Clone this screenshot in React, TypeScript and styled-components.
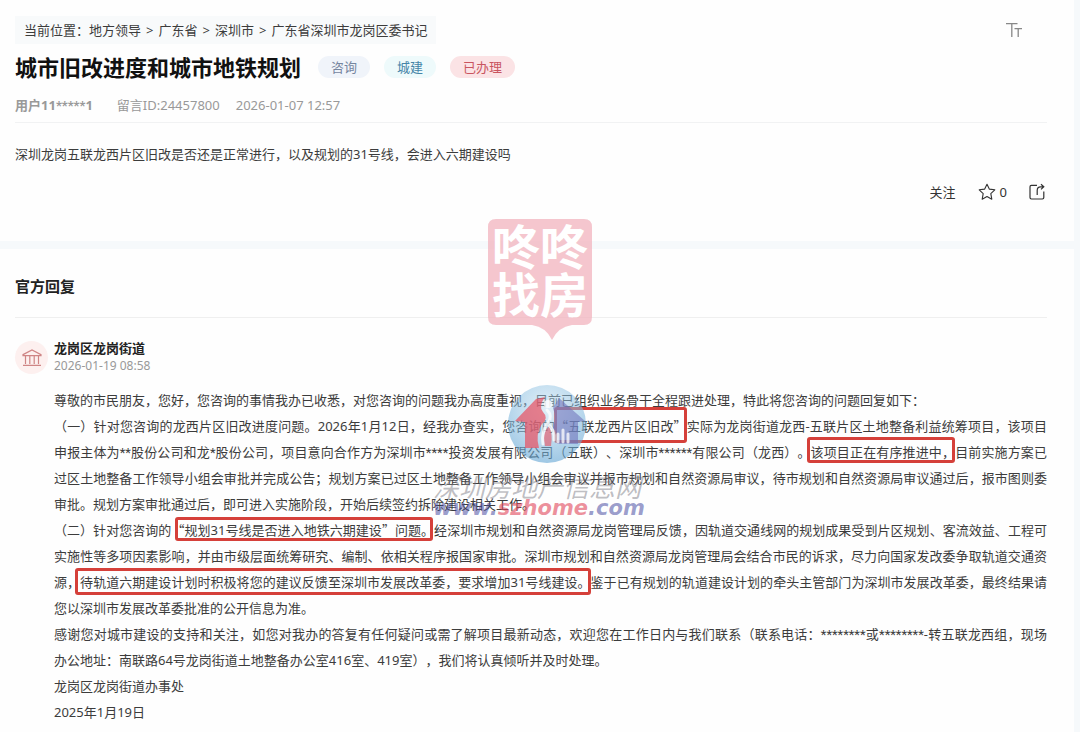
import React from 'react';
import styled, { createGlobalStyle } from 'styled-components';

const GlobalStyle = createGlobalStyle`
  * { box-sizing: border-box; }
  body {
    margin: 0;
    background: #f6f9fb;
    color: #3c3c3c;
    font-family: "Noto Sans", "Noto Sans CJK SC", sans-serif;
    font-size: 13px;
    line-height: 26px;
    text-spacing-trim: space-all;
  }
  h1, h2, h3, p { margin: 0; }
`;

const Page = styled.main`
  position: relative;
  display: flex;
  flex-direction: column;
  gap: 8px;
  min-height: 100vh;
  padding-right: 6px;
  background: #f6f9fb;
`;

const Card = styled.section<{ $top: number; $bottom: number; $grow?: boolean }>`
  flex: ${p => (p.$grow ? '1 0 auto' : 'none')};
  background: #fefefe;
  padding: ${p => p.$top}px 27px ${p => p.$bottom}px 15px;
`;

const TopBar = styled.div`
  display: flex;
  justify-content: space-between;
  align-items: center;
  padding-right: 24px;
`;

const Breadcrumb = styled.nav`
  display: flex;
  gap: 5px;
  padding: 0 9px;
  background: #f8fafb;
  line-height: 28px;
  a { color: inherit; text-decoration: none; }
`;

const IconButton = styled.button<{ $muted?: boolean }>`
  display: flex;
  align-items: center;
  gap: 4px;
  padding: 0;
  border: 0;
  background: none;
  color: ${p => (p.$muted ? '#888' : '#333')};
  font: inherit;
  cursor: pointer;
`;

const TitleRow = styled.div`
  display: flex;
  align-items: center;
  gap: 17px;
  margin-top: 7px;
`;

const Title = styled.h1`
  color: #111;
  font-size: 22px;
  line-height: 32px;
  font-weight: 700;
`;

const Tags = styled.div`
  display: flex;
  gap: 14px;
`;

const Tag = styled.span<{ $bg: string; $fg: string }>`
  padding: 0 13px;
  border-radius: 11px;
  line-height: 22px;
  background: ${p => p.$bg};
  color: ${p => p.$fg};
`;

const Meta = styled.div`
  display: flex;
  gap: 16px;
  margin-top: 9px;
  padding-bottom: 4px;
  border-bottom: 1px solid #f1f2f3;
  color: #999;
  strong { margin-right: 8px; }
`;

const Question = styled.p`
  margin-top: 18px;
`;

const Actions = styled.div`
  display: flex;
  justify-content: flex-end;
  gap: 22px;
  margin-top: 12px;
  padding-right: 2px;
`;

const SectionTitle = styled.h2`
  padding-bottom: 18px;
  border-bottom: 1px solid #efefef;
  color: #222;
  font-size: 15px;
  font-weight: 700;
`;

const Reply = styled.article`
  display: grid;
  grid-template-columns: 33px 1fr;
  column-gap: 6px;
  margin-top: 21px;
`;

const Avatar = styled.div`
  display: flex;
  align-items: center;
  justify-content: center;
  width: 33px;
  height: 33px;
  margin-top: 2px;
  border-radius: 50%;
  background: #fdf0ef;
`;

const Author = styled.h3`
  color: #222;
  font-size: 13px;
  line-height: 18px;
  font-weight: 700;
`;

const Time = styled.time`
  display: block;
  color: #999;
  font-size: 12px;
  line-height: 18px;
`;

const Body = styled.div`
  grid-column: 2;
  margin-top: 12px;
`;

const Line = styled.span<{ $full?: boolean }>`
  display: block;
  white-space: nowrap;
  text-align: justify;
  text-align-last: ${p => (p.$full ? 'justify' : 'left')};
`;

const Masked = styled.span`
  font-family: Roboto, sans-serif;
  line-height: 1;
`;

const Wide = styled.span`
  font-family: "Noto Sans CJK SC", sans-serif;
  line-height: 1;
`;

const Marked = styled.mark<{ $inset: string }>`
  position: relative;
  background: none;
  color: inherit;
  &::after {
    content: "";
    position: absolute;
    inset: ${p => p.$inset};
    border: 3px solid #d5403a;
    border-radius: 3px;
  }
`;

const Seal = styled.div`
  position: absolute;
  top: 219px;
  left: 50%;
  width: 104px;
  height: 122px;
  margin-left: -52px;
  pointer-events: none;
`;

const SealShape = styled.svg`
  position: absolute;
  inset: 0;
`;

const SealText = styled.div`
  position: relative;
  padding-top: 4px;
  color: #fff;
  font-size: 48px;
  line-height: 48px;
  font-weight: 700;
  text-align: center;
`;

const SiteMark = styled.div`
  position: absolute;
  top: 384px;
  left: 50%;
  width: 216px;
  margin-left: -107px;
  pointer-events: none;
`;

const SiteLogo = styled.svg`
  display: block;
  margin-left: 74px;
`;

const SiteName = styled.div`
  margin-top: 12px;
  color: rgba(110, 110, 120, 0.45);
  font-size: 26px;
  line-height: 22px;
  font-style: italic;
  white-space: nowrap;
`;

const SiteUrl = styled.div`
  color: rgba(70, 75, 160, 0.55);
  font-family: "DejaVu Sans", sans-serif;
  font-size: 21px;
  line-height: 20px;
  font-weight: 700;
  font-style: italic;
  b { color: rgba(225, 70, 90, 0.6); }
`;

const Stars = ({ n }: { n: number }) => <Masked>{'*'.repeat(n)}</Masked>;

export default function App() {
  return (
    <Page lang="zh-CN">
      <GlobalStyle />
      <Card $top={16} $bottom={36}>
        <TopBar>
          <Breadcrumb aria-label="当前位置">
            <span>当前位置：<a href="#leaders">地方领导</a></span>
            <span>&gt;</span>
            <a href="#gd">广东省</a>
            <span>&gt;</span>
            <a href="#sz">深圳市</a>
            <span>&gt;</span>
            <a href="#lg">广东省深圳市龙岗区委书记</a>
          </Breadcrumb>
          <IconButton aria-label="字号" $muted>
            <svg width="18" height="18" viewBox="0 0 18 18" fill="none" stroke="currentColor" strokeWidth="1.3">
              <path d="M1 2.6H12.5M6.8 2.6V16M9.5 7.6H17M13.2 7.6V16" />
            </svg>
          </IconButton>
        </TopBar>
        <TitleRow>
          <Title>城市旧改进度和城市地铁规划</Title>
          <Tags>
            <Tag $bg="#f0f4fa" $fg="#7686a0">咨询</Tag>
            <Tag $bg="#eefafb" $fg="#4585a8">城建</Tag>
            <Tag $bg="#fbe3e5" $fg="#c9555f">已办理</Tag>
          </Tags>
        </TitleRow>
        <Meta>
          <strong>用户11<Stars n={5} />1</strong>
          <span>留言ID:24457800</span>
          <time>2026-01-07 12:57</time>
        </Meta>
        <Question>深圳龙岗五联龙西片区旧改是否还是正常进行，以及规划的31号线，会进入六期建设吗</Question>
        <Actions>
          <IconButton>关注</IconButton>
          <IconButton aria-label="收藏">
            <svg width="18" height="18" viewBox="0 0 18 18" fill="none" stroke="currentColor" strokeWidth="1.1" strokeLinejoin="round">
              <path d="M9 1.2L11.3 6.1L16.8 6.8L12.8 10.6L13.8 16.2L9 13.5L4.2 16.2L5.2 10.6L1.2 6.8L6.7 6.1Z" />
            </svg>
            0
          </IconButton>
          <IconButton aria-label="分享">
            <svg width="16" height="18" viewBox="0 0 16 18" fill="none" stroke="currentColor" strokeWidth="1.2">
              <path d="M8 2.4H2.4Q1 2.4 1 3.8V14.6Q1 16 2.4 16H13.4Q14.8 16 14.8 14.6V8.5M8.2 12V7.4Q8.2 3.8 11.6 3.8H14.6M12 1.2L14.8 3.8L12 6.4" />
            </svg>
          </IconButton>
        </Actions>
      </Card>
      <Card $top={24} $bottom={4} $grow>
        <SectionTitle>官方回复</SectionTitle>
        <Reply>
          <Avatar>
            <svg width="20" height="18" viewBox="0 0 20 18" fill="none" stroke="#cf8585" strokeWidth="1.2">
              <path d="M1 5.6L10 1L19 5.6V6.6H1ZM3.5 7V15M7.8 7V15M12.2 7V15M16.5 7V15M1 16.4H19" />
            </svg>
          </Avatar>
          <div>
            <Author>龙岗区龙岗街道</Author>
            <Time>2026-01-19 08:58</Time>
          </div>
          <Body>
            <p>
              <Line>尊敬的市民朋友，您好，您咨询的事情我办已收悉，对您咨询的问题我办高度重视，目前已组织业务骨干全程跟进处理，特此将您咨询的问题回复如下：</Line>
            </p>
            <p>
              <Line $full>（一）针对您咨询的龙西片区旧改进度问题。2026年1月12日，经我办查实，您咨询的<Marked $inset="-10px 0 -8px -1px"><Wide>“</Wide>五联龙西片区旧改<Wide>”</Wide></Marked>实际为龙岗街道龙西-五联片区土地整备利益统筹项目，该项目</Line>
              <Line $full>申报主体为<Stars n={2} />股份公司和龙<Stars n={1} />股份公司，项目意向合作方为深圳市<Stars n={4} />投资发展有限公司（五联）、深圳市<Stars n={6} />有限公司（龙西）。<Marked $inset="-6px 0 -2px -4px">该项目正在有序推进中，</Marked>目前实施方案已</Line>
              <Line $full>过区土地整备工作领导小组会审批并完成公告；规划方案已过区土地整备工作领导小组会审议并报市规划和自然资源局审议，待市规划和自然资源局审议通过后，报市图则委</Line>
              <Line>审批。规划方案审批通过后，即可进入实施阶段，开始后续签约拆除建设相关工作。</Line>
            </p>
            <p>
              <Line $full>（二）针对您咨询的<Marked $inset="-4px 1px -2px 4px"><Wide>“</Wide>规划31号线是否进入地铁六期建设<Wide>”</Wide>问题。</Marked>经深圳市规划和自然资源局龙岗管理局反馈，因轨道交通线网的规划成果受到片区规划、客流效益、工程可</Line>
              <Line $full>实施性等多项因素影响，并由市级层面统筹研究、编制、依相关程序报国家审批。深圳市规划和自然资源局龙岗管理局会结合市民的诉求，尽力向国家发改委争取轨道交通资</Line>
              <Line $full>源，<Marked $inset="-5px 0 -4px -5px">待轨道六期建设计划时积极将您的建议反馈至深圳市发展改革委，要求增加31号线建设。</Marked>鉴于已有规划的轨道建设计划的牵头主管部门为深圳市发展改革委，最终结果请</Line>
              <Line>您以深圳市发展改革委批准的公开信息为准。</Line>
            </p>
            <p>
              <Line $full>感谢您对城市建设的支持和关注，如您对我办的答复有任何疑问或需了解项目最新动态，欢迎您在工作日内与我们联系（联系电话：<Stars n={8} />或<Stars n={8} />-转五联龙西组，现场</Line>
              <Line>办公地址：南联路64号龙岗街道土地整备办公室416室、419室），我们将认真倾听并及时处理。</Line>
            </p>
            <p><Line>龙岗区龙岗街道办事处</Line></p>
            <p><Line>2025年1月19日</Line></p>
          </Body>
        </Reply>
      </Card>
      <Seal>
        <SealShape width="104" height="122" viewBox="0 0 104 122">
          <path d="M8 0H96Q104 0 104 8V98Q104 106 96 106H84Q70 108 64 121Q58 108 44 106H8Q0 106 0 98V8Q0 0 8 0Z" fill="#f2b3bd" fillOpacity="0.75" />
        </SealShape>
        <SealText>咚咚<br />找房</SealText>
      </Seal>
      <SiteMark>
        <SiteLogo width="80" height="80" viewBox="0 0 80 80">
          <defs>
            <radialGradient id="globe" cx="0.5" cy="0.3" r="0.7">
              <stop offset="0" stopColor="#b9dcf0" stopOpacity="0.45" />
              <stop offset="1" stopColor="#5fa3d3" stopOpacity="0.6" />
            </radialGradient>
          </defs>
          <circle cx="40" cy="40" r="39" fill="url(#globe)" />
          <path d="M8 37L29 15L38 13Q31 22 36 28Q42 34 35 40Q28 50 32 64H18V38Z" fill="#e84e5f" fillOpacity="0.7" />
          <path d="M46 24L52 14L78 37L71 38V60H50Q52 50 46 44Q50 34 46 24Z" fill="#6a6bb8" fillOpacity="0.55" />
          <path d="M38 62Q34 50 42 42Q46 50 44 62Z" fill="#e84e5f" fillOpacity="0.6" />
          <circle cx="41" cy="20" r="4" fill="#fff" fillOpacity="0.8" />
          <path d="M40 26Q46 32 41 39Q34 48 36 60M41 40Q48 46 47 56M51 58V50M56 58V46M61 58V50" fill="none" stroke="#fff" strokeOpacity="0.75" strokeWidth="3" strokeLinecap="round" />
        </SiteLogo>
        <SiteName>深圳房地产信息网</SiteName>
        <SiteUrl>www.<b>szhome</b>.com</SiteUrl>
      </SiteMark>
    </Page>
  );
}
